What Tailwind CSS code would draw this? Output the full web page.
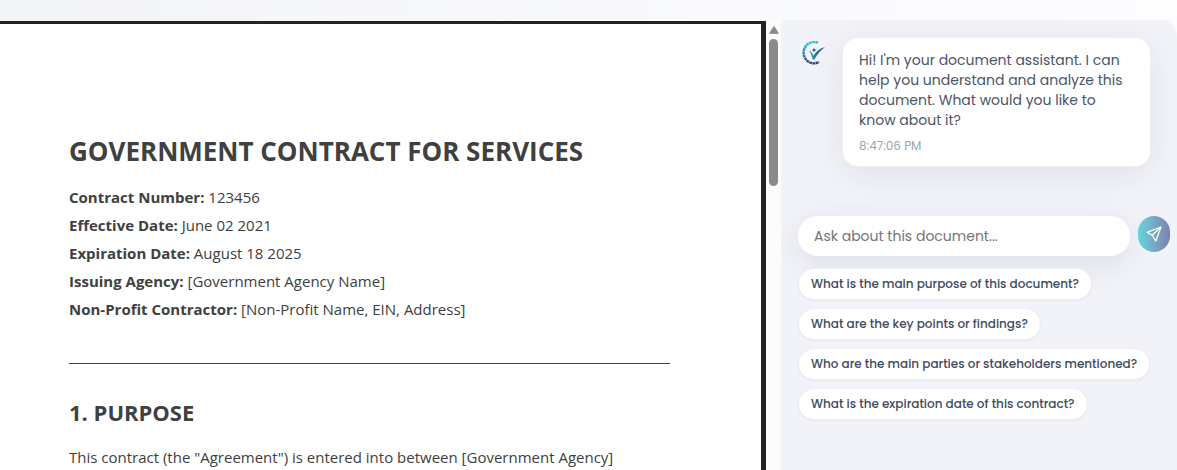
<!DOCTYPE html>
<html lang="en">
<head>
<meta charset="utf-8">
<meta name="viewport" content="width=device-width, initial-scale=1">
<title>Document assistant</title>
<script src="https://cdn.jsdelivr.net/npm/@tailwindcss/browser@4"></script>
</head>
<body class="flex h-screen flex-col overflow-hidden bg-[#fcfcfe]">
<div class="h-[21px] shrink-0 bg-linear-to-r from-[#f3f4f8] to-[#fdfdff]"></div>
<div class="flex min-h-0 flex-1">
  <main class="min-w-0 flex-1 overflow-hidden border-t-[3px] border-r-[5px] border-[#222222] bg-white pt-[109px] pr-[91px] pl-[69px] font-['Segoe_UI','Open_Sans',sans-serif] text-[15px] text-[#404040]">
    <h1 class="text-[26px] leading-9 font-bold whitespace-nowrap">GOVERNMENT CONTRACT FOR SERVICES</h1>
    <div class="mt-[14px] leading-7 whitespace-nowrap">
      <p><strong>Contract Number:</strong> 123456</p>
      <p><strong>Effective Date:</strong> June 02 2021</p>
      <p><strong>Expiration Date:</strong> August 18 2025</p>
      <p><strong>Issuing Agency:</strong> [Government Agency Name]</p>
      <p><strong>Non-Profit Contractor:</strong> [Non-Profit Name, EIN, Address]</p>
    </div>
    <hr class="mt-10 border-t border-[#404040]">
    <h2 class="mt-8 text-[22px] leading-8 font-bold">1. PURPOSE</h2>
    <p class="mt-[15px] leading-7 whitespace-nowrap">This contract (the "Agreement") is entered into between [Government Agency]</p>
  </main>
  <div class="flex w-[15px] shrink-0 flex-col items-center bg-[#fcfcfc]" aria-hidden="true">
    <svg class="mt-[5px] h-2 w-[10px]" viewBox="0 0 10 8"><path d="M5 .5 9.300 7.300H.7Z" fill="#8b8b8b" stroke="#8b8b8b" stroke-linejoin="round"/></svg>
    <div class="mt-[5px] h-[147px] w-[9px] rounded-full bg-[#8b8b8b]"></div>
  </div>
  <aside class="-mt-px w-[396px] shrink-0 overflow-hidden rounded-tr-2xl bg-[#f2f3f8] pt-[17px] pr-[7px] pl-[17px] font-['Poppins','Inter',sans-serif]">
    <div class="flex items-start pr-[19px]">
      <svg class="mt-1 ml-1 h-6 w-6 shrink-0" viewBox="0 0 24 24" fill="none" role="img" aria-label="Assistant">
        <defs><linearGradient id="ring" x1="0" y1="0" x2="0" y2="1"><stop stop-color="#36c6cb"/><stop offset=".55" stop-color="#1985a1"/><stop offset="1" stop-color="#373c78"/></linearGradient>
        <linearGradient id="tick" x1="0" y1="1" x2="1" y2="0"><stop stop-color="#19b5bb"/><stop offset=".45" stop-color="#226e9b"/><stop offset="1" stop-color="#55508c"/></linearGradient></defs>
        <path d="M16 1.500C8.500-.8 1.600 4.500 1.600 11.500c0 8 7.900 13.500 15.500 9.500" stroke="url(#ring)" stroke-width="2.400" stroke-dasharray="2.700 .5"/>
        <circle cx="12" cy="9" r="1.500" fill="#245f8d"/>
        <path d="M7 9.500c2 1 3.200 2.500 4.500 5.200C14 10.500 18 7.200 23 6c-4 3-7.500 6.800-10.600 12.500h-1.800C10 15 9 12 7 9.500Z" fill="url(#tick)"/>
      </svg>
      <div class="ml-4 min-w-0 flex-1 rounded-2xl border border-[#eef0f6] bg-white px-4 py-3 shadow-[0_8px_32px_rgba(31,38,80,0.08)]">
        <p class="text-sm leading-5 text-[#4a5568]">Hi! I'm your document assistant. I can help you understand and analyze this document. What would you like to know about it?</p>
        <time class="mt-2 block text-xs leading-4 text-[#9ca3af]">8:47:06 PM</time>
      </div>
    </div>
    <form class="mt-[49px] flex items-start gap-2">
      <input type="text" aria-label="Ask about this document" placeholder="Ask about this document..." class="h-10 min-w-0 flex-1 rounded-full bg-white px-4 text-sm text-[#4a5568] shadow-[0_8px_32px_rgba(31,38,80,0.1)] outline-none placeholder:text-[#757575]">
      <button type="button" aria-label="Send" class="flex h-9 w-8 shrink-0 items-center justify-center rounded-full bg-linear-to-r from-[#64d5d9] to-[#7b80b1]">
        <svg class="h-4 w-4" viewBox="0 0 16 16" fill="none" stroke="#fff" stroke-width="1.300" stroke-linejoin="round" stroke-linecap="round"><path d="M15 1 1 6.300l5.200 2.900L9.800 15 15 1ZM15 1 6.200 9.200"/></svg>
      </button>
    </form>
    <div class="mt-3 flex flex-col items-start gap-2 text-xs font-medium whitespace-nowrap text-[#3f4a60]">
      <button type="button" class="h-8 rounded-full border border-[#eef0f6] bg-white px-3 shadow-xs">What is the main purpose of this document?</button>
      <button type="button" class="h-8 rounded-full border border-[#eef0f6] bg-white px-3 shadow-xs">What are the key points or findings?</button>
      <button type="button" class="h-8 rounded-full border border-[#eef0f6] bg-white px-3 shadow-xs">Who are the main parties or stakeholders mentioned?</button>
      <button type="button" class="h-8 rounded-full border border-[#eef0f6] bg-white px-3 shadow-xs">What is the expiration date of this contract?</button>
    </div>
  </aside>
</div>
</body>
</html>
